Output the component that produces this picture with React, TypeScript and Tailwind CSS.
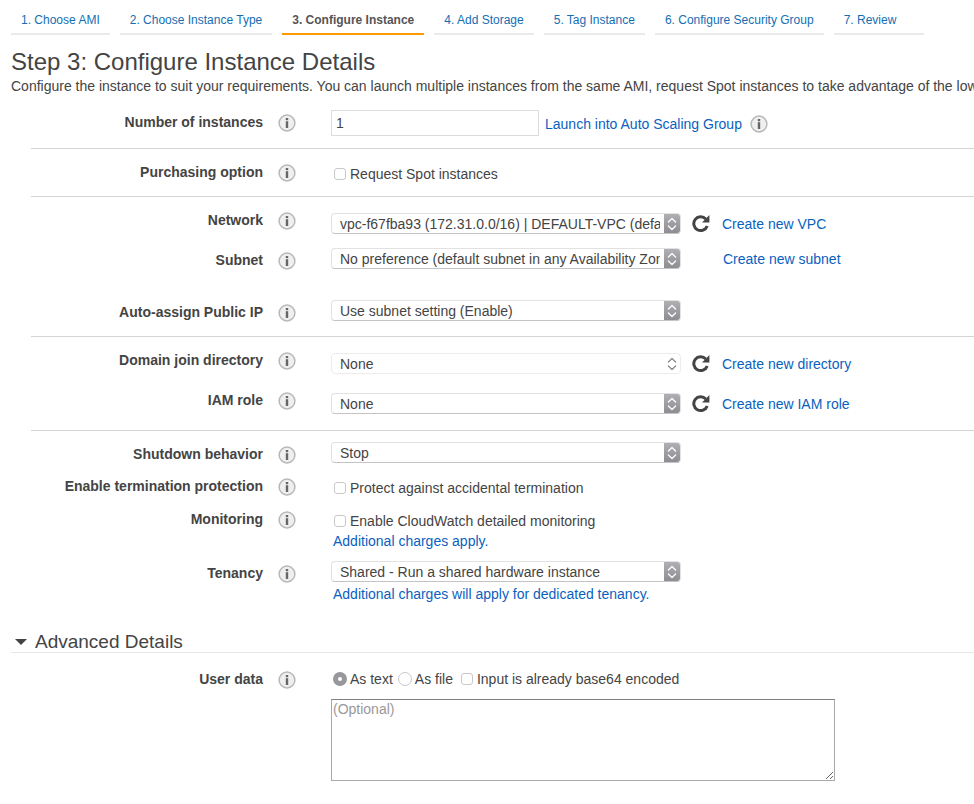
import type { ReactNode } from "react";

const steps = [
  "1. Choose AMI",
  "2. Choose Instance Type",
  "3. Configure Instance",
  "4. Add Storage",
  "5. Tag Instance",
  "6. Configure Security Group",
  "7. Review",
];

function InfoButton({ about }: { about: string }) {
  return (
    <button type="button" aria-label={`About ${about}`} className="size-[18px] shrink-0">
      <svg viewBox="0 0 18 18" className="size-[18px]" aria-hidden="true">
        <circle cx="9" cy="9" r="7.9" fill="#efefef" stroke="#b8b8b8" strokeWidth="1.5" />
        <rect x="7.8" y="4" width="2.4" height="2.2" fill="#666" />
        <path d="M7.8 7.2h2.4v6.8H7.8z" fill="#666" />
      </svg>
    </button>
  );
}

function RefreshButton({ about }: { about: string }) {
  return (
    <button type="button" aria-label={`Refresh ${about}`} className="ml-[11px] size-[18px] shrink-0">
      <svg viewBox="0 0 18 18" className="size-[18px]" aria-hidden="true">
        <path d="M13.8 4A6.9 6.9 0 1 0 15.2 11" fill="none" stroke="#444" strokeWidth="3" />
        <path d="M17.4 0V7.4H10L12 5.4 15 2.4z" fill="#444" />
      </svg>
    </button>
  );
}

function Select({ id, value, plain = false }: { id: string; value: string; plain?: boolean }) {
  return (
    <div
      className={`grid h-[21px] w-[350px] shrink-0 overflow-hidden rounded border bg-white ${
        plain ? "border-[#ececec]" : "border-[#e2e2e2] border-b-[#c4c4c4]"
      }`}
    >
      <select
        id={id}
        className="col-start-1 row-start-1 h-5 w-full appearance-none bg-transparent pr-5 pl-2 leading-5 outline-none"
      >
        <option>{value}</option>
      </select>
      <span
        className={`pointer-events-none col-start-1 row-start-1 flex h-5 w-4 items-center justify-center justify-self-end ${
          plain ? "text-[#8a8a8a]" : "bg-linear-to-b from-[#b0b0b4] to-[#8b8b90] text-white"
        }`}
      >
        <svg viewBox="0 0 10 14" className="h-3.5 w-2.5" fill="none" stroke="currentColor" strokeWidth="1.3" aria-hidden="true">
          <path d="M1.4 5 5 1.5 8.6 5M1.4 9 5 12.5 8.6 9" strokeLinecap="round" strokeLinejoin="round" />
        </svg>
      </span>
    </div>
  );
}

function Check({ id, children }: { id: string; children: ReactNode }) {
  return (
    <div className="flex items-center gap-1 pl-[3px]">
      <input
        id={id}
        type="checkbox"
        className="size-3 shrink-0 appearance-none rounded-[3px] border border-[#c8c8c8] bg-white checked:bg-[#8e8e93]"
      />
      <label htmlFor={id}>{children}</label>
    </div>
  );
}

function Radio({ id, checked = false, children }: { id: string; checked?: boolean; children: ReactNode }) {
  return (
    <div className="flex items-center gap-[3px]">
      <input
        id={id}
        type="radio"
        name="user-data-mode"
        defaultChecked={checked}
        className="size-3.5 shrink-0 appearance-none rounded-full border border-[#c8c8c8] bg-white checked:border-5 checked:border-[#97979c]"
      />
      <label htmlFor={id}>{children}</label>
    </div>
  );
}

function Link({ className = "", children }: { className?: string; children: ReactNode }) {
  return (
    <a href="#" className={`whitespace-nowrap text-[#0a5fbf] ${className}`}>
      {children}
    </a>
  );
}

interface RowProps {
  label: string;
  htmlFor: string;
  size: string;
  children: ReactNode;
}

function Row({ label, htmlFor, size, children }: RowProps) {
  return (
    <div className={`flex items-start ${size}`}>
      <label htmlFor={htmlFor} className="w-58 shrink-0 pt-0.5 text-right font-bold">
        {label}
      </label>
      <div className="ml-[15px] flex w-[53px] shrink-0 pt-1">
        <InfoButton about={label} />
      </div>
      {children}
    </div>
  );
}

const section = "border-t border-[#d4d4d4] pt-[11px]";

export default function App() {
  return (
    <main className="min-h-screen overflow-x-hidden bg-white pb-5 font-['Liberation_Sans',Arial,sans-serif] text-sm leading-5 text-[#444]">
      <nav aria-label="Wizard steps" className="flex gap-2.5 pt-3 pl-[11px] text-xs whitespace-nowrap">
        {steps.map((step, i) => (
          <a
            key={step}
            href="#"
            aria-current={i === 2 ? "step" : undefined}
            className={`min-w-[90px] border-b-2 px-2.5 pb-[5px] ${
              i === 2 ? "border-[#ff9900] font-bold text-[#555]" : "border-[#eaeaea] text-[#146eb4]"
            }`}
          >
            {step}
          </a>
        ))}
      </nav>

      <header className="overflow-hidden pt-3 pb-px pl-[11px] whitespace-nowrap">
        <h1 className="text-2xl leading-[29px]">Step 3: Configure Instance Details</h1>
        <p>
          Configure the instance to suit your requirements. You can launch multiple instances from the same AMI, request
          Spot instances to take advantage of the lower pricing, and more.
        </p>
      </header>

      <form className="pl-[31px]">
        <section className="pt-[13px]">
          <Row label="Number of instances" htmlFor="count" size="min-h-[38px]">
            <input
              id="count"
              type="text"
              defaultValue="1"
              className="h-[26px] w-[208px] border border-[#dcdcdc] px-1 outline-none"
            />
            <div className="flex items-center gap-2 pt-1 pl-1.5">
              <Link>Launch into Auto Scaling Group</Link>
              <InfoButton about="Auto Scaling Groups" />
            </div>
          </Row>
        </section>

        <section className={section}>
          <Row label="Purchasing option" htmlFor="spot" size="min-h-9">
            <div className="pt-1">
              <Check id="spot">Request Spot instances</Check>
            </div>
          </Row>
        </section>

        <section className={section}>
          <Row label="Network" htmlFor="network" size="min-h-10">
            <div className="flex items-center pt-[5px]">
              <Select id="network" value="vpc-f67fba93 (172.31.0.0/16) | DEFAULT-VPC (default)" />
              <RefreshButton about="networks" />
              <Link className="ml-3">Create new VPC</Link>
            </div>
          </Row>
          <Row label="Subnet" htmlFor="subnet" size="min-h-13">
            <div className="flex items-center">
              <Select id="subnet" value="No preference (default subnet in any Availability Zone)" />
              <Link className="ml-[42px]">Create new subnet</Link>
            </div>
          </Row>
          <Row label="Auto-assign Public IP" htmlFor="public-ip" size="min-h-9">
            <Select id="public-ip" value="Use subnet setting (Enable)" />
          </Row>
        </section>

        <section className={section}>
          <Row label="Domain join directory" htmlFor="directory" size="min-h-10">
            <div className="flex items-center pt-[5px]">
              <Select id="directory" value="None" plain />
              <RefreshButton about="directories" />
              <Link className="ml-3">Create new directory</Link>
            </div>
          </Row>
          <Row label="IAM role" htmlFor="iam-role" size="min-h-[42px]">
            <div className="flex items-center pt-[5px]">
              <Select id="iam-role" value="None" />
              <RefreshButton about="IAM roles" />
              <Link className="ml-3">Create new IAM role</Link>
            </div>
          </Row>
        </section>

        <section className={section}>
          <Row label="Shutdown behavior" htmlFor="shutdown" size="min-h-8">
            <Select id="shutdown" value="Stop" />
          </Row>
          <Row label="Enable termination protection" htmlFor="termination" size="min-h-[33px]">
            <div className="pt-1">
              <Check id="termination">Protect against accidental termination</Check>
            </div>
          </Row>
          <Row label="Monitoring" htmlFor="monitoring" size="min-h-[54px]">
            <div className="pt-1">
              <Check id="monitoring">Enable CloudWatch detailed monitoring</Check>
              <Link className="pl-0.5">Additional charges apply.</Link>
            </div>
          </Row>
          <Row label="Tenancy" htmlFor="tenancy" size="min-h-[70px]">
            <div>
              <Select id="tenancy" value="Shared - Run a shared hardware instance" />
              <div className="pt-0.5 pl-0.5">
                <Link>Additional charges will apply for dedicated tenancy.</Link>
              </div>
            </div>
          </Row>
        </section>

        <section>
          <h2 className="-ml-5 border-b border-[#e6e6e6]">
            <button type="button" aria-expanded="true" className="flex items-center gap-2 pl-1 text-[19px] leading-[21px]">
              <svg viewBox="0 0 12 6" className="h-1.5 w-3" aria-hidden="true">
                <path d="M0 0h12L6 6z" fill="#444" />
              </svg>
              Advanced Details
            </button>
          </h2>
          <div className="pt-3.5">
            <Row label="User data" htmlFor="user-data" size="min-h-8">
              <div className="flex flex-wrap items-center gap-x-[5px] pt-0.5 pl-0.5">
                <Radio id="as-text" checked>
                  As text
                </Radio>
                <Radio id="as-file">As file</Radio>
                <Check id="base64">Input is already base64 encoded</Check>
              </div>
            </Row>
          </div>
          <textarea
            id="user-data"
            placeholder="(Optional)"
            className="ml-75 block h-[82px] w-[504px] resize border border-[#a9a9a9] border-t-[#808080] px-px leading-[18px] outline-none placeholder:text-[#999]"
          />
        </section>
      </form>
    </main>
  );
}
